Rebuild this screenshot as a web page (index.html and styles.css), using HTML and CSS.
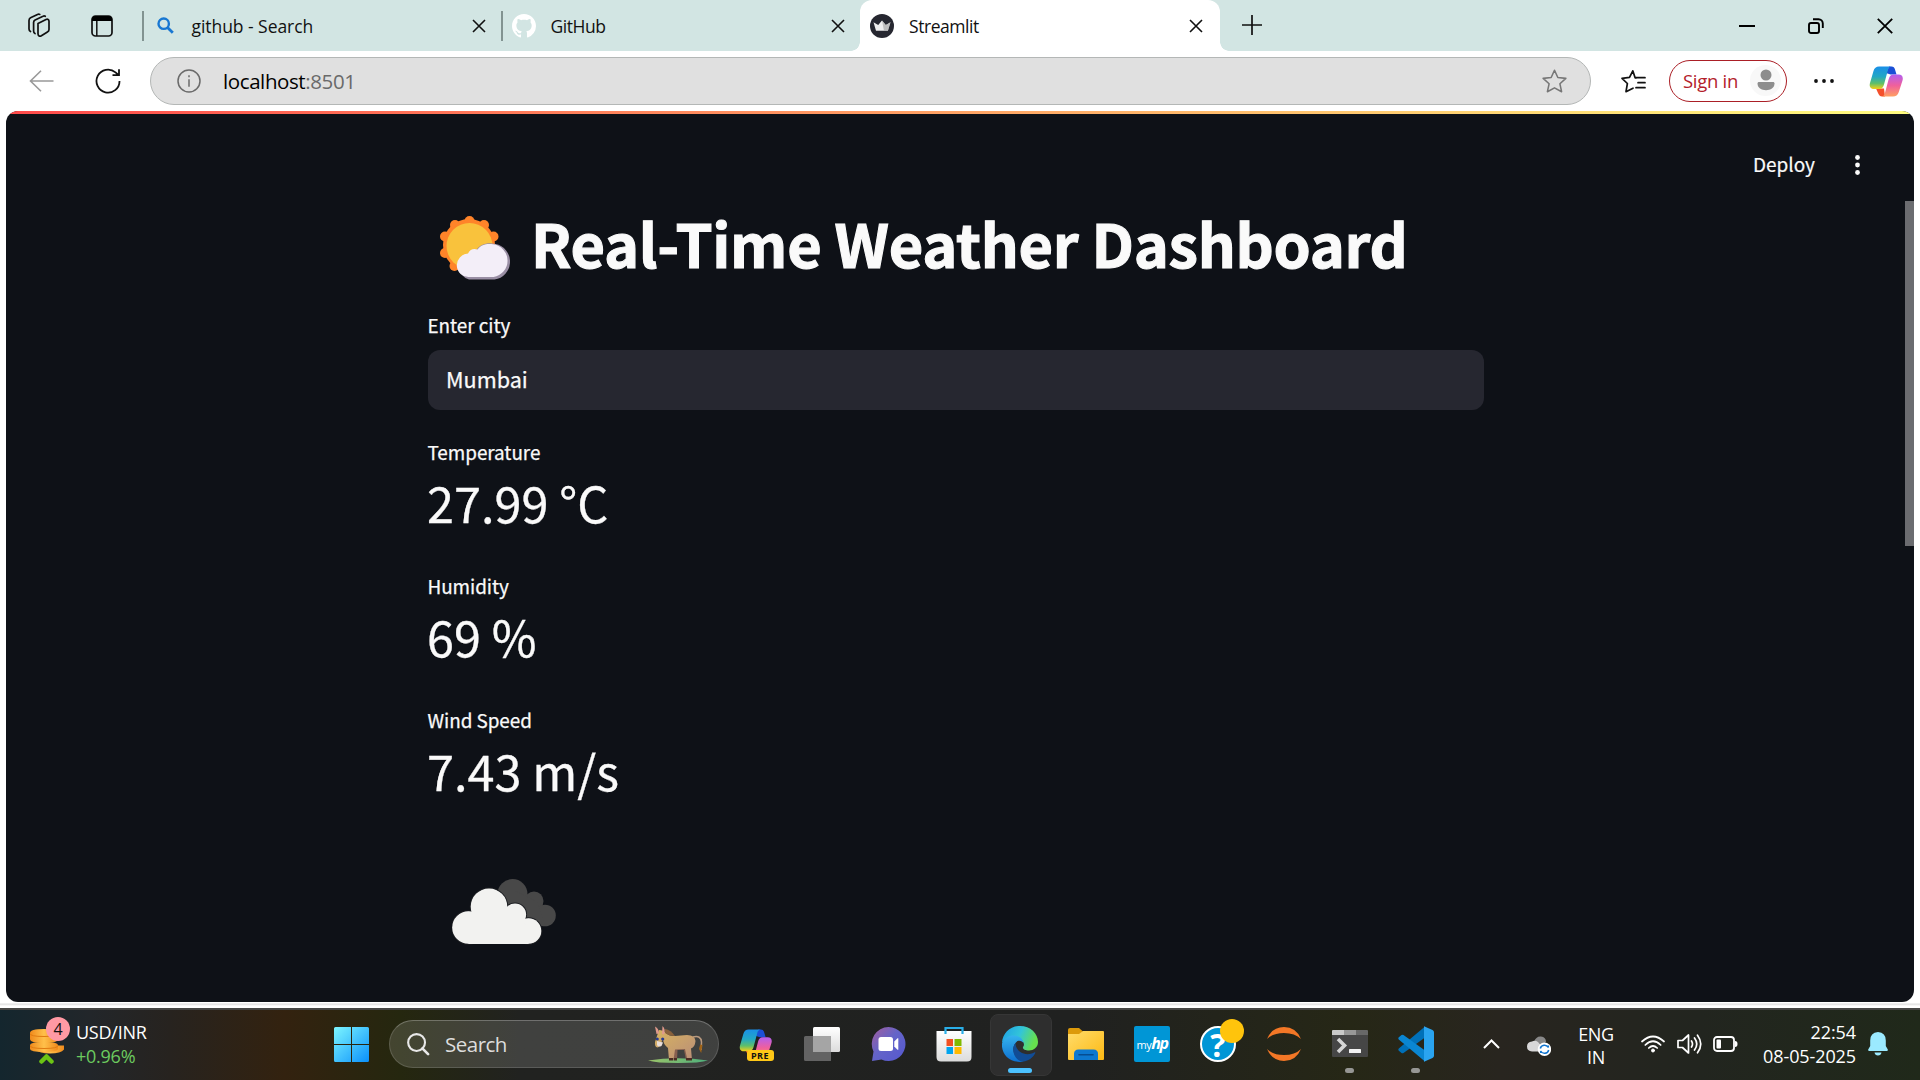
FILE: index.html
```html
<!DOCTYPE html>
<html lang="en">
<head>
<meta charset="utf-8">
<title>Streamlit</title>
<link rel="stylesheet" href="styles.css">
</head>
<body>
<svg class="defs" width="0" height="0" aria-hidden="true">
  <defs>
    <linearGradient id="cp1" x1="0" y1="0" x2="0" y2="1"><stop offset="0" stop-color="#1a8fe8"/><stop offset=".45" stop-color="#22a8c4"/><stop offset=".75" stop-color="#5fbf6a"/><stop offset="1" stop-color="#f5d016"/></linearGradient>
    <linearGradient id="cp2" x1="0" y1="0" x2="0" y2="1"><stop offset="0" stop-color="#b35ef0"/><stop offset=".5" stop-color="#f0609c"/><stop offset="1" stop-color="#ffa061"/></linearGradient>
    <linearGradient id="win" x1="0" y1="0" x2="1" y2="1"><stop offset="0" stop-color="#7df6ff"/><stop offset="1" stop-color="#0a90fb"/></linearGradient>
    <linearGradient id="coin" x1="0" y1="0" x2="1" y2="0"><stop offset="0" stop-color="#f08a1c"/><stop offset=".5" stop-color="#ffc04a"/><stop offset="1" stop-color="#f08a1c"/></linearGradient>
    <linearGradient id="chat" x1="0" y1="0" x2="1" y2="1"><stop offset="0" stop-color="#a45d9c"/><stop offset=".45" stop-color="#6464c8"/><stop offset="1" stop-color="#5558d0"/></linearGradient>
    <linearGradient id="edge1" x1="0" y1="0" x2="1" y2="0.3"><stop offset="0" stop-color="#1d9fe8"/><stop offset=".55" stop-color="#33c5d8"/><stop offset="1" stop-color="#66e04e"/></linearGradient>
    <linearGradient id="edge2" x1="0" y1="0" x2="0" y2="1"><stop offset="0" stop-color="#35b3ee"/><stop offset="1" stop-color="#0d6fcf"/></linearGradient>
    <linearGradient id="fold" x1="0" y1="0" x2="1" y2="1"><stop offset="0" stop-color="#ffdc6b"/><stop offset="1" stop-color="#fdb913"/></linearGradient>
    <linearGradient id="paper" x1="0" y1="0" x2="0" y2="1"><stop offset="0" stop-color="#ffffff"/><stop offset="1" stop-color="#dcdcdc"/></linearGradient>
    <linearGradient id="donk" x1="0" y1="0" x2="1" y2="1"><stop offset="0" stop-color="#d8b460"/><stop offset="1" stop-color="#b98d78"/></linearGradient>
    <linearGradient id="grass" x1="0" y1="0" x2="1" y2="0"><stop offset="0" stop-color="#9cc46a"/><stop offset="1" stop-color="#4eb07c"/></linearGradient>
    <symbol id="x" viewBox="0 0 14 14"><path d="M1 1l12 12M13 1L1 13" fill="none" stroke="#111" stroke-width="1.6"/></symbol>
    <symbol id="copilot" viewBox="0 0 34 31">
      <path d="M17 7l3-6.5h2.500c2 0 3 1.200 3.500 3l1.500 5h-6z" fill="#1b4fd6"/>
      <path d="M7 22.500l2.500 5.500c.8 1.700 2 2.500 3.500 2.500h3l-1-8z" fill="#f4502c"/>
      <path d="M10 .5h12.500c-2 0-3 1.500-3.500 3.200l-4 14.800c-.7 2.600-2 4.500-5 4.500H5c-3.500 0-5-2.500-4-6L4.500 5C5.300 2 7.200.5 10 .5z" fill="url(#cp1)"/>
      <path d="M24 30.500H12.500c2 0 2.900-1.400 3.400-3.200L19.700 13c.7-2.600 2-4.500 5-4.500h4.800c3.500 0 5 2.500 4 6L29.800 26c-.9 3-3 4.500-5.800 4.500z" fill="url(#cp2)"/>
    </symbol>
  </defs>
</svg>

<header class="tabstrip">
  <svg class="ic-workspaces" viewBox="0 0 26 26" fill="none" stroke="#111" stroke-width="1.700" stroke-linejoin="round" stroke-linecap="round"><path d="M12 10.500l8-4c1.600-.7 3 0 3 1.800v8.200c0 1.200-.5 2-1.600 2.600l-6 3.600c-1.800 1-3.400.2-3.400-1.900z"/><path d="M9 20.500c-1-.5-1.400-1.300-1.400-2.400V9.500c0-1.200.4-2 1.500-2.600L17 3.200c.8-.4 1.600-.4 2.300.1"/><path d="M4.500 18.500C3.400 18 3 17.200 3 16V7.400c0-1.200.5-2 1.500-2.600L11.500 1.400c.8-.4 1.500-.5 2.200 0"/></svg>
  <svg class="ic-tabs" viewBox="0 0 22 22"><rect x="1" y="1" width="20" height="20" rx="3.500" fill="none" stroke="#111" stroke-width="1.700"/><path d="M1 6V4.500A3.500 3.500 0 014.500 1h13A3.500 3.500 0 0121 4.500V6z" fill="#000"/><path d="M5.800 6v15" stroke="#111" stroke-width="1.500"/></svg>
  <div class="tab tab-first">
    <svg width="17" height="17" viewBox="0 0 17 17" fill="none" stroke="#1877d2"><circle cx="6.700" cy="6.700" r="5.200" stroke-width="2.400"/><path d="M10.500 10.500l5.300 5.300" stroke-width="2.800"/></svg>
    <span class="tab-title wide-title">github - Search</span>
    <svg class="x"><use href="#x"/></svg>
  </div>
  <div class="tab tab-second">
    <svg width="24" height="24" viewBox="0 0 16 16" fill="#fff"><path d="M8 0C3.580 0 0 3.580 0 8c0 3.540 2.290 6.530 5.470 7.590.4.070.55-.17.55-.38 0-.19-.01-.82-.01-1.490-2.010.37-2.530-.49-2.690-.94-.09-.23-.48-.94-.82-1.130-.28-.15-.68-.52-.01-.53.63-.01 1.080.58 1.230.82.72 1.210 1.870.87 2.330.66.070-.52.280-.87.510-1.070-1.780-.2-3.640-.89-3.640-3.950 0-.87.310-1.590.82-2.150-.08-.2-.36-1.020.08-2.120 0 0 .67-.21 2.200.82.640-.18 1.320-.27 2-.27s1.360.09 2 .27c1.530-1.040 2.200-.82 2.200-.82.440 1.100.160 1.920.080 2.120.510.56.820 1.270.820 2.150 0 3.070-1.870 3.750-3.650 3.950.290.250.540.730.540 1.480 0 1.070-.01 1.930-.01 2.200 0 .21.150.46.550.38A8.010 8.010 0 0016 8c0-4.420-3.580-8-8-8z"/></svg>
    <span class="tab-title">GitHub</span>
    <svg class="x"><use href="#x"/></svg>
  </div>
  <div class="tab tab-active">
    <svg width="24" height="24" viewBox="0 0 24 24"><circle cx="12" cy="12" r="12" fill="#262730"/><path d="M3.500 8.300l4.700 2.600L12 6.500l3.800 4.400 4.700-2.600-2.600 8.500H6z" fill="#eee"/><path d="M12 6.500l3.800 4.400 4.700-2.600-2.600 8.500H14z" fill="#aaa" opacity=".7"/></svg>
    <span class="tab-title">Streamlit</span>
    <svg class="x"><use href="#x"/></svg>
  </div>
  <svg class="ic-plus" viewBox="0 0 22 22" stroke="#111" stroke-width="1.700"><path d="M11 1v20M1 11h20"/></svg>
  <div class="win-controls">
    <svg width="16" height="16" viewBox="0 0 16 16"><path d="M0 8h16" stroke="#000" stroke-width="2"/></svg>
    <svg width="16" height="16" viewBox="0 0 16 16" fill="none" stroke="#000" stroke-width="1.900"><rect x="1" y="5" width="10" height="10" rx="2"/><path d="M5 1.200h5.500a4.300 4.300 0 014.300 4.300V10"/></svg>
    <svg width="16" height="16" viewBox="0 0 16 16" stroke="#000" stroke-width="1.800"><path d="M.8.8l14.400 14.400M15.200.8L.8 15.200"/></svg>
  </div>
</header>

<nav class="toolbar">
  <svg class="ic-back" viewBox="0 0 25 22" fill="none" stroke="#999" stroke-width="1.600"><path d="M24.500 11H1.500M12 .8L1.500 11 12 21.200"/></svg>
  <svg class="ic-reload" viewBox="0 0 26 26" fill="none" stroke="#111" stroke-width="1.800"><path d="M24.500 13A11.500 11.500 0 1 1 20.500 4.400L23.500 7M24 1.200V7.200h-6.500"/></svg>
  <div class="address">
    <svg class="ic-info" viewBox="0 0 24 24" fill="none" stroke="#6a6a6a" stroke-width="1.500"><circle cx="12" cy="12" r="11"/><path d="M12 10.300v7.500M12 6.300v2"/></svg>
    <span class="url">localhost<span class="port">:8501</span></span>
    <svg class="ic-star" viewBox="0 0 24 24" fill="none" stroke="#777" stroke-width="1.500" stroke-linejoin="round"><path d="M12 1.200l3.200 7 7.700.8-5.700 5.200 1.600 7.600L12 18.100l-6.800 3.700 1.600-7.600L1.100 9l7.700-.8z"/></svg>
  </div>
  <svg class="ic-favs" viewBox="0 0 25 24" fill="none" stroke="#111" stroke-width="1.700" stroke-linejoin="round" stroke-linecap="round"><path d="M15 9l-.9-.2L11.800 1.800 8.500 8.300l-7.500 1 5.400 5.200-1.400 8.200L12 19.200M15 8.700h9M17 13.700h7M15 18.700h9"/></svg>
  <div class="signin"><span>Sign in</span><i class="avatar"><svg width="18" height="22" viewBox="0 0 18 22" fill="#8d8d8d"><circle cx="9" cy="6" r="5.500"/><path d="M2 13h14c1 0 1.500.6 1.500 1.600C17.500 19 13.500 21.200 9 21.200S.5 19 .5 14.600C.5 13.600 1 13 2 13z"/></svg></i></div>
  <svg class="ic-more" viewBox="0 0 20 4" fill="#111"><circle cx="2" cy="2" r="1.900"/><circle cx="10" cy="2" r="1.900"/><circle cx="18" cy="2" r="1.900"/></svg>
  <svg class="ic-copilot"><use href="#copilot"/></svg>
</nav>

<main class="frame">
  <div class="page">
    <div class="decoration"></div>
    <div class="app-header">
      <span class="deploy">Deploy</span>
      <svg width="5" height="20" viewBox="0 0 5 20" fill="#fafafa"><circle cx="2.500" cy="2.500" r="2.400"/><circle cx="2.500" cy="10" r="2.400"/><circle cx="2.500" cy="17.500" r="2.400"/></svg>
    </div>
    <div class="app-body">
      <section class="column">
        <div class="title">
          <svg class="sun" viewBox="0 0 70 64">
            <g fill="#ff8429"><circle cx="29" cy="29" r="26"/><circle cx="29.500" cy="5" r="5"/><circle cx="15" cy="9" r="5"/><circle cx="44" cy="9" r="5"/><circle cx="5" cy="20.500" r="5"/><circle cx="53.500" cy="20.500" r="5"/><circle cx="5" cy="37" r="5"/><circle cx="14.500" cy="50" r="5"/></g>
            <circle cx="29.500" cy="30" r="23" fill="#f9c23c"/>
            <path d="M29 63.500a13 13 0 01-1-25c3-1 3.500-4 8-4 4-6.500 12-8.500 19.500-6.500a18 18 0 01-1 35.500z" fill="#998ea4"/>
            <path d="M29 61a11.700 11.700 0 01-1-23.400c2-4.500 6-5.500 9.500-4C41 28.700 47 27.300 53 28.300a16.500 16.500 0 01.5 32.700z" fill="#f3eef8"/>
          </svg>
          <h1>Real-Time Weather Dashboard</h1>
        </div>
        <label class="label" for="city">Enter city</label>
        <input class="city" id="city" value="Mumbai">
        <div class="metric"><div class="label">Temperature</div><div class="value">27.99 °C</div></div>
        <div class="metric"><div class="label">Humidity</div><div class="value">69 %</div></div>
        <div class="metric"><div class="label">Wind Speed</div><div class="value">7.43 m/s</div></div>
        <svg class="cloud" viewBox="0 0 104 66">
          <g fill="#484848"><circle cx="60.500" cy="15" r="15"/><circle cx="82" cy="22" r="9.500"/><circle cx="93" cy="36.500" r="10.800"/><path d="M60 10l25 13 8 24H60z"/></g>
          <g fill="#f2f2f0" stroke="#1b1d21" stroke-width="1.600"><circle cx="16.500" cy="48.500" r="16.500"/><circle cx="37" cy="27.800" r="18.500"/><circle cx="63" cy="35.500" r="11.300"/><circle cx="76.500" cy="52" r="13"/></g>
          <g fill="#f2f2f0"><circle cx="16.500" cy="48.500" r="16.300"/><circle cx="37" cy="27.800" r="18.300"/><circle cx="63" cy="35.500" r="11.100"/><circle cx="76.500" cy="52" r="12.800"/><path d="M16.500 40L37 25l26 9 13.500 14v17h-60z"/></g>
        </svg>
      </section>
      <div class="scrollbar"></div>
    </div>
  </div>
</main>

<footer class="taskbar">
  <div class="widget">
    <div class="coins">
      <svg width="34" height="36" viewBox="0 0 34 36"><g fill="url(#coin)"><path d="M6 17.500h28v4q-3 4-14 4t-14-4z"/><path d="M0 5q0-4 14-4t14 4v6q0 4-14 4T0 11z"/><path d="M0 17q0-3 14-3t14 3v4q0 3-14 3T0 21z"/></g><path d="M0 5.500q0 3 14 3t14-3M0 17.500q0 3 14 3t14-3" stroke="#e07b12" fill="none"/><path d="M11.500 33.500l5-5 5 5" fill="none" stroke="#6cc414" stroke-width="4.500" stroke-linecap="round" stroke-linejoin="round"/></svg>
      <span class="badge">4</span>
    </div>
    <div class="rates"><span>USD/INR</span><span class="up">+0.96%</span></div>
  </div>
  <svg class="start" viewBox="0 0 35 35"><path d="M1.500 0H17v17H0V1.500Q0 0 1.500 0zM18 0h15.500Q35 0 35 1.500V17H18zM0 18h17v17H1.500Q0 35 0 33.500zM18 18h17v15.500q0 1.500-1.500 1.500H18z" fill="url(#win)"/></svg>
  <div class="search">
    <svg class="ic-search" viewBox="0 0 24 24" fill="none" stroke="#e8e8e8"><circle cx="10" cy="10" r="8.800" stroke-width="2.200"/><path d="M16 16l6 6" stroke-width="2.800" stroke-linecap="round"/></svg>
    <span>Search</span>
    <svg class="donkey" viewBox="0 0 60 38">
      <path d="M0 35.500Q30 31 60 35.500q-8 2.500-30 2.500T0 35.500z" fill="url(#grass)"/>
      <path d="M45 12q8-2 8.500 5l-.3 8" fill="none" stroke="#b99a80" stroke-width="1.500"/><path d="M52.200 19.500l2.200.5-1.200 8-2.200-4z" fill="#a06418"/>
      <path d="M24 22l2 13h3l.5-10H36l2 10h3l1-14z" fill="#86604f"/>
      <path d="M11 5q4 0 8 4 3 2.500 8 2l12-1q8 0 8.500 6-.5 6-4.500 7.500L44 35h-4.500L37 24l-10 .5-1.500 10.500h-4.500L20 23q-5-4-5-9l-2 4q-1 4-3.500 4.500Q6.500 22 7 17z" fill="url(#donk)"/>
      <path d="M17 4q6 1 10 7-6 0-10-3z" fill="#88613c"/>
      <path d="M8.500 9L7 1.500q4 2 4 7M14 9l.5-8Q18 4 16 9.500z" fill="#e09a8c"/>
      <path d="M9 16l6 1.500-1.500 3.500q-3.500 1.500-4.500-1z" fill="#e8ddd8"/>
      <circle cx="9.300" cy="14" r="1.500" fill="#263a91"/><circle cx="14.700" cy="14" r="1.600" fill="#263a91"/>
      <path d="M21 33h4.300v2.500H21zM26 33h3v2.500h-3zM38 33h2.500v2.500H38zM40.500 33H44v2.500h-3.500z" fill="#4a2c24"/>
    </svg>
  </div>
  <div class="apps">
    <div class="app"><div class="copilot-pre"><svg width="33" height="30"><use href="#copilot"/></svg><span class="pre">PRE</span></div></div>
    <div class="app"><svg width="36" height="36" viewBox="0 0 36 36"><rect x="9" y="1" width="27" height="25" rx="1.500" fill="url(#paper)"/><path d="M0 11.500Q0 10 1.500 10H9v16h18v8.500q0 .5-.8.500H1.500Q0 35 0 33.500z" fill="#636363"/><path d="M9 10h18v16H9z" fill="#a5a5a5"/></svg></div>
    <div class="app"><svg width="35" height="36" viewBox="0 0 35 36"><path d="M17.500 1a17 17 0 11-7 32.500L1 35l1.500-9.500A17 17 0 0117.500 1z" fill="url(#chat)"/><rect x="7.500" y="11" width="14.500" height="14" rx="2.500" fill="#fff"/><path d="M23.300 15.500l3.200-3.200h.8v11.500h-.8l-3.200-3.200z" fill="#fff"/></svg></div>
    <div class="app"><svg width="36" height="36" viewBox="0 0 36 36"><path d="M.5 5h35v26q0 4.500-4.500 4.500H5Q.5 35.500.5 31z" fill="url(#paper)"/><path d="M9.500 8V2h17v6" fill="none" stroke="#29aee8" stroke-width="2.200"/><path d="M10.500 13H17v7h-6.500z" fill="#f25022"/><path d="M18.500 13h7v7h-7z" fill="#7fba00"/><path d="M10.500 21H17v7h-6.500z" fill="#00a4ef"/><path d="M18.500 21h7v7h-7z" fill="#ffb900"/></svg></div>
    <div class="app current"><svg width="36" height="36" viewBox="0 0 36 36"><path d="M0 17C.5 7 8.500 0 18 0c10.500 0 18 7.500 18 16 0 5.500-4.500 8.500-9 8.500-4 0-6.500-1.500-6-3.500 2-2 1-7-4-8C10 11 3 12 0 17z" fill="url(#edge1)"/><path d="M0 17.500C2 12 7 9.500 11.500 9.500c7 0 10 4.500 10 8-1-3-6-4-8-.5C8 24 14 34 22 35.500 8 38-1 28 0 17.500z" fill="url(#edge2)"/><path d="M13.500 17C8 24 13 35 21 35.600c6-.8 10-4 12.200-8.300.5-1-.3-1.300-1-.8C25 30.500 14 27.500 13.500 17z" fill="#114c95"/></svg><i class="run wide"></i></div>
    <div class="app"><svg width="36" height="36" viewBox="0 0 36 36"><path d="M0 4q0-2 2-2h9l4 3.500L11 9H0z" fill="#dc9a0b"/><path d="M0 8h11l4-3h20q1 0 1 1v27q0 1-1 1H1q-1 0-1-1z" fill="url(#fold)"/><path d="M6 34V28q0-4.500 4.500-4.500h15Q30 23.500 30 28v6z" fill="#0d78cf"/><path d="M11 28.700h14" stroke="#064d91" stroke-width="1.600" stroke-linecap="round"/></svg></div>
    <div class="app"><div class="myhp">my<b>hp</b></div></div>
    <div class="app"><div class="help">?<i class="dot"></i></div></div>
    <div class="app"><svg width="34" height="36" viewBox="0 0 34 36" fill="#f37726"><path d="M0 13Q5 1 17 1t17 12Q28 7 17 7T0 13zM0 23q5 12 17 12t17-12q-6 6-17 6T0 23z"/></svg></div>
    <div class="app"><svg width="36" height="36" viewBox="0 0 36 36"><path d="M0 8h36v22q0 1-1 1H1q-1 0-1-1z" fill="#464646"/><path d="M0 9V5q0-1 1-1h11v5z" fill="#c9c9c9"/><path d="M12 4h12v5H12z" fill="#979797"/><path d="M24 4h11q1 0 1 1v4H24z" fill="#686868"/><path d="M6 13l6.500 6.500L6 26" fill="none" stroke="#d5d5d5" stroke-width="3.600"/><rect x="17" y="23" width="12" height="4" rx=".6" fill="#f2f2f2"/></svg><i class="run"></i></div>
    <div class="app"><svg width="36" height="36" viewBox="0 0 36 36"><path d="M27 .5V11.500L5.500 27q-1 .6-2 0L.8 24.700q-1-1.200 0-2.300z" fill="#0070b8"/><path d="M27 35.500V24.500L5.500 9q-1-.6-2 0L.8 11.300q-1 1.200 0 2.300z" fill="#0a86d2"/><path d="M26 .2l8.500 3.800q1.500.8 1.500 2.300v23.400q0 1.500-1.500 2.300L26 35.800z" fill="#2aa4f0"/></svg><i class="run"></i></div>
  </div>
  <div class="tray">
    <svg class="ic-up" viewBox="0 0 17 10" fill="none" stroke="#fff" stroke-width="2"><path d="M1 9l7.500-7.500L16 9"/></svg>
    <svg class="ic-cloud" viewBox="0 0 24 20"><path d="M7 6q2-6 7-5.500 5 .5 5 5.500l-8 5z" fill="#888"/><path d="M5 15.500Q0 15 0 10.500T5 5.500q3-1.500 6 .5l5 6-3 3.500z" fill="#d8d8d8"/><circle cx="17.500" cy="13.300" r="6.700" fill="#fff"/><path d="M13.300 12.500a4.300 4.300 0 018-1v-2M21.700 14a4.300 4.300 0 01-8 1v2" fill="none" stroke="#1074ce" stroke-width="1.500"/></svg>
    <div class="lang"><span>ENG</span><span>IN</span></div>
    <svg class="ic-wifi" viewBox="0 0 24 18" fill="none" stroke="#fff" stroke-width="1.700" stroke-linecap="round"><path d="M1 6.500q11-10 22 0M4.300 10q7.700-7.500 15.400 0M7.800 13q4.200-4 8.400 0"/><circle cx="12" cy="15.500" r="1.500" fill="#fff" stroke-width="1"/></svg>
    <svg class="ic-sound" viewBox="0 0 25 20" fill="none" stroke="#fff" stroke-width="1.700" stroke-linejoin="round" stroke-linecap="round"><path d="M1 6.500h4.500L11.500 1v18l-6-5.500H1zM14.500 7q2 3 0 6M17.500 4q4.500 6 0 12M20.500 1.200q6.500 8.800 0 17.600"/></svg>
    <svg class="ic-batt" viewBox="0 0 25 16"><rect x="1" y="1" width="20" height="14" rx="3" fill="none" stroke="#fff" stroke-width="1.800"/><rect x="3.500" y="3.500" width="4.500" height="9" rx="1" fill="#fff"/><path d="M22 5q2.500 0 2.500 3T22 11z" fill="#fff"/></svg>
    <div class="clock"><span>22:54</span><span>08-05-2025</span></div>
    <svg class="ic-bell" viewBox="0 0 20 24" fill="#9beaff"><path d="M10 0q7.800.5 7.800 8.500V14l2 3.500q.3 1.500-1 1.500H1.200Q0 19 .2 17.500l2-3.500V8.500Q2.200.5 10 0zM6.500 20.500h7Q13 23.500 10 23.500T6.500 20.500z"/></svg>
  </div>
</footer>
</body>
</html>
```
FILE: styles.css
```css
* { box-sizing: border-box; }
body {
  margin: 0;
  width: 1920px;
  height: 1080px;
  overflow: hidden;
  display: flex;
  flex-direction: column;
  background: #fff;
  color: #111;
  font-family: "Open Sans", "Noto Sans", sans-serif;
  font-size: 17px;
}
svg { display: block; flex: none; }
span { white-space: nowrap; }
.defs { position: absolute; }

/* Tab strip */
.tabstrip { height: 51px; display: flex; align-items: center; background: #d2e5e3; }
.ic-workspaces { width: 26px; height: 26px; margin-left: 26px; }
.ic-tabs { width: 22px; height: 22px; margin-left: 39px; }
.tab { height: 51px; display: flex; align-items: center; }
.tab svg { margin-right: 15px; }
.tab .x { width: 14px; height: 14px; margin: 0 0 0 auto; }
.tab-title { font-size: 17.500px; letter-spacing: -0.450px; }
.wide-title { letter-spacing: -0.050px; }
.tab-first::before, .tab-second::before {
  content: ""; width: 1.500px; height: 30px; background: #829391; flex: none;
}
.tab-first { width: 359px; margin-left: 29px; padding-right: 15px; }
.tab-first::before { margin-right: 13px; }
.tab-first svg { margin-right: 18px; }
.tab-second { width: 359px; padding-right: 15px; }
.tab-second::before { margin-right: 9px; }
.tab-active {
  position: relative;
  width: 360px; padding: 0 17px 0 10px;
  border-radius: 12px 12px 0 0; background: #fff;
}
.tab-active::before, .tab-active::after {
  content: ""; position: absolute; bottom: 0; width: 9px; height: 9px;
}
.tab-active::before { left: -9px; background: radial-gradient(circle at 0 0, #d2e5e3 8.500px, #fff 9px); }
.tab-active::after { right: -9px; background: radial-gradient(circle at 100% 0, #d2e5e3 8.500px, #fff 9px); }
.ic-plus { width: 22px; height: 22px; margin: -2px 0 0 21px; }
.win-controls { display: flex; gap: 53px; margin: 0 27px 0 auto; }

/* Toolbar */
.toolbar { height: 60px; display: flex; align-items: center; background: #fff; }
.ic-back { width: 25px; height: 22px; margin-left: 29px; }
.ic-reload { width: 26px; height: 26px; margin-left: 41px; }
.address {
  width: 1441px; height: 48px; margin-left: 29px; padding: 0 23px 0 26px;
  display: flex; align-items: center;
  border: 1.500px solid #b4b7b6; border-radius: 24px; background: #e0e0e0;
}
.ic-info { width: 24px; height: 24px; margin-right: 22px; }
.url { font-size: 20.500px; letter-spacing: -0.400px; color: #000; }
.port { color: #6a6a6a; }
.ic-star { width: 25px; height: 25px; margin-left: auto; }
.ic-favs { width: 25px; height: 24px; margin-left: 30px; }
.signin {
  width: 118px; height: 42px; margin-left: 23px; padding: 0 5px 2px 13px;
  display: flex; align-items: center; justify-content: space-between;
  border: 1.500px solid #ab1f26; border-radius: 21px;
  color: #b3202a; font-size: 18.500px; letter-spacing: -0.300px;
}
.avatar { width: 31px; height: 31px; display: grid; place-items: center; border-radius: 50%; background: #f8f8f8; }
.ic-more { width: 20px; height: 4px; margin-left: 27px; }
.ic-copilot { width: 34px; height: 31px; margin-left: 35px; }

/* Streamlit page */
.frame { height: 897px; padding: 0 6px 6px; background: linear-gradient(#fff 892px, #ddd 893px, #fff 895px); }
.page {
  height: 891px; display: flex; flex-direction: column; overflow: hidden;
  border-radius: 12px; background: #0e1117; color: #fafafa;
  font-family: "Noto Sans CJK JP", "Noto Sans CJK SC", sans-serif;
}
.decoration { height: 3px; flex: none; background: linear-gradient(90deg, #ff4b4b, #fffd80); }
.app-header {
  height: 87px; flex: none; padding: 14px 54px 0 0;
  display: flex; align-items: center; justify-content: flex-end; gap: 40px;
}
.app-header .deploy { height: 31px; font-size: 19px; line-height: 29px; -webkit-text-stroke: 0.200px #fafafa; }
.app-body { flex: 1; display: flex; justify-content: space-between; }
.column { width: 1056px; margin-left: 422px; display: flex; flex-direction: column; }
.scrollbar { width: 9px; height: 345px; background: #6b6c70; }
.title { height: 79px; display: flex; align-items: center; margin-top: 2px; }
.sun { width: 70px; height: 64px; margin: 10px 21px 0 12px; }
h1 {
  margin: 0; font-size: 59.500px; line-height: 79px; font-weight: 700;
  letter-spacing: -0.300px; white-space: nowrap; -webkit-text-stroke: 1.100px #fafafa;
}
.label { height: 30px; line-height: 30px; font-size: 18.900px; letter-spacing: -0.050px; margin-left: -0.500px; -webkit-text-stroke: 0.250px #fafafa; }
.title + .label { margin-top: 28px; }
.city {
  width: 1056px; height: 60px; margin: 10px 0 27px; padding: 0 18px 3px;
  border: 0; border-radius: 12px; background: #262730; color: #fafafa;
  font: 21.600px "Noto Sans CJK JP", sans-serif; -webkit-text-stroke: 0.250px #fafafa;
}
.metric { height: 134px; }
.value { margin: 5px 0 0 -1px; height: 60px; line-height: 60px; font-size: 48.600px; white-space: nowrap; -webkit-text-stroke: 0.300px #fafafa; }
.cloud { width: 104px; height: 66px; margin: 40px 0 0 24px; }

/* Taskbar */
.taskbar {
  height: 72px; padding-bottom: 2px; display: flex; align-items: center; color: #fff;
  border-top: 2px solid #464644;
  background: linear-gradient(90deg, #14262e 0, #22262a 90px, #27231f 170px, #33220f 285px, #25270f 400px, #212220 520px, #202120 1080px, #262716 1350px, #28251f 1500px, #22251f 1700px, #20291a 1920px);
}
.widget { width: 334px; flex: none; padding-left: 30px; display: flex; align-items: center; gap: 12px; }
.coins { position: relative; padding-top: 4px; }
.badge {
  position: absolute; left: 16px; top: -7px; width: 24px; height: 24px;
  border-radius: 50%; background: #ff99a4; color: #111; font-size: 16px; line-height: 24px; text-align: center;
}
.rates, .lang, .clock { display: flex; flex-direction: column; font-size: 18px; line-height: 24px; }
.rates { letter-spacing: -0.250px; }
.up { color: #6ccb5f; }
.start { width: 35px; height: 35px; }
.search {
  width: 330px; height: 48px; flex: none; margin-left: 20px; padding: 0 10px 0 17px;
  display: flex; align-items: center;
  border: 1.500px solid #ffffff24; border-top-color: #ffffff40; border-radius: 24px; background: #ffffff24;
  color: #ddd; font-size: 20.500px; letter-spacing: -0.500px;
}
.ic-search { width: 23px; height: 23px; margin-right: 15px; }
.donkey { width: 60px; height: 38px; margin-left: auto; }
.apps { display: flex; margin-left: 4px; }
.app { position: relative; width: 66px; height: 60px; display: grid; place-items: center; }
.current::before { content: ""; position: absolute; left: 3px; top: 0; width: 60px; height: 60px; border: 1.500px solid #363636; border-radius: 8px; background: #2e2e2e; }
.current svg { position: relative; }
.run { position: absolute; left: 28px; bottom: 1px; width: 9px; height: 5px; border-radius: 3px; background: #969694; }
.run.wide { left: 21px; width: 24px; background: #4cc2ff; }
.copilot-pre { position: relative; height: 30px; width: 35px; }
.pre {
  position: absolute; left: 8px; top: 21px; width: 27px; height: 11px;
  border-radius: 3px; background: #ffc817; color: #111; font: 700 9px/11px "Open Sans", sans-serif; letter-spacing: 0.500px; text-align: center;
}
.myhp {
  width: 36px; height: 36px; border-radius: 2px; background: #0096d6; color: #fff;
  font: 11px/35px "Open Sans", sans-serif; text-align: center; letter-spacing: -0.500px;
}
.myhp b { font-size: 16px; font-style: italic; letter-spacing: -1.500px; }
.help {
  position: relative; width: 36px; height: 36px; border: 2px solid #fff; border-radius: 50%; background: #0096d6;
  font: 700 32px/33px "Open Sans", sans-serif; text-align: center;
}
.dot { position: absolute; left: 18px; top: -9px; width: 24px; height: 24px; border-radius: 50%; background: #ffc40c; }
.tray { display: flex; align-items: center; flex: 1; }
.ic-up { width: 17px; height: 10px; margin-left: 34px; }
.ic-cloud { width: 24px; height: 20px; margin: 4px 0 0 27px; }
.lang { width: 40px; margin-left: 25px; text-align: center; padding-top: 3px; line-height: 23px; letter-spacing: -0.300px; }
.ic-wifi { width: 24px; height: 18px; margin-left: 25px; }
.ic-sound { width: 25px; height: 20px; margin-left: 12px; }
.ic-batt { width: 25px; height: 16px; margin-left: 11px; }
.clock { width: 94px; margin-left: 24px; text-align: right; letter-spacing: -0.100px; }
.ic-bell { width: 20px; height: 24px; margin-left: 12px; }
```
